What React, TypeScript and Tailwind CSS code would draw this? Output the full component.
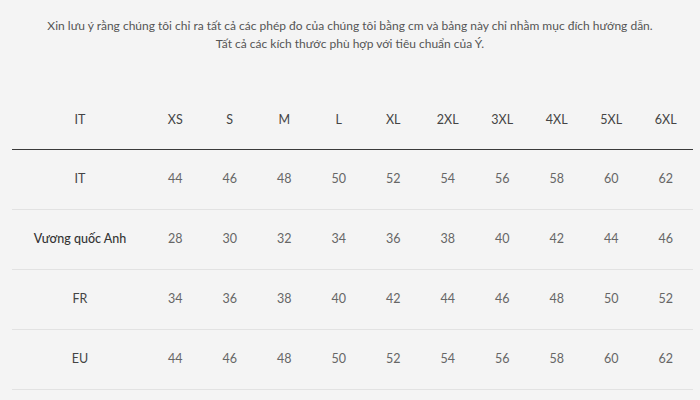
// Size guide modal: intro note + conversion table (IT / UK / FR / EU).
const SIZES = ["XS", "S", "M", "L", "XL", "2XL", "3XL", "4XL", "5XL", "6XL"];

const ROWS: { label: string; values: number[]; strong?: boolean }[] = [
  { label: "IT", values: [44, 46, 48, 50, 52, 54, 56, 58, 60, 62] },
  { label: "Vương quốc Anh", values: [28, 30, 32, 34, 36, 38, 40, 42, 44, 46], strong: true },
  { label: "FR", values: [34, 36, 38, 40, 42, 44, 46, 48, 50, 52] },
  { label: "EU", values: [44, 46, 48, 50, 52, 54, 56, 58, 60, 62] },
];

const GRID = "grid grid-cols-[136px_repeat(10,1fr)] items-center";

export default function App() {
  return (
    <div className="relative w-[700px] h-[400px] overflow-hidden bg-[#f4f4f4] font-['Lato','Open_Sans',sans-serif]">
      <div className="pt-[17px] text-center text-[12px] leading-[18px] text-[#555]">
        <p>
          Xin lưu ý rằng chúng tôi chỉ ra tất cả các phép đo của chúng tôi bằng cm và bảng này chỉ nhằm mục đích hướng dẫn.
        </p>
        <p>Tất cả các kích thước phù hợp với tiêu chuẩn của Ý.</p>
      </div>

      <div className="ml-[12px] mt-[39px] w-[681px] text-[12.5px]">
        <div className={`${GRID} h-[58px] border-b border-[#3a3a3a] text-[#444]`}>
          <div className="text-center">IT</div>
          {SIZES.map((s) => (
            <div key={s} className="text-center">
              {s}
            </div>
          ))}
        </div>
        {ROWS.map((r) => (
          <div key={r.label} className={`${GRID} h-[60px] border-b border-[#e2e2e2]`}>
            <div className={r.strong ? "text-center text-[#333] font-medium" : "text-center text-[#444]"}>
              {r.label}
            </div>
            {r.values.map((v, i) => (
              <div key={i} className="text-center text-[#666]">
                {v}
              </div>
            ))}
          </div>
        ))}
      </div>
    </div>
  );
}
